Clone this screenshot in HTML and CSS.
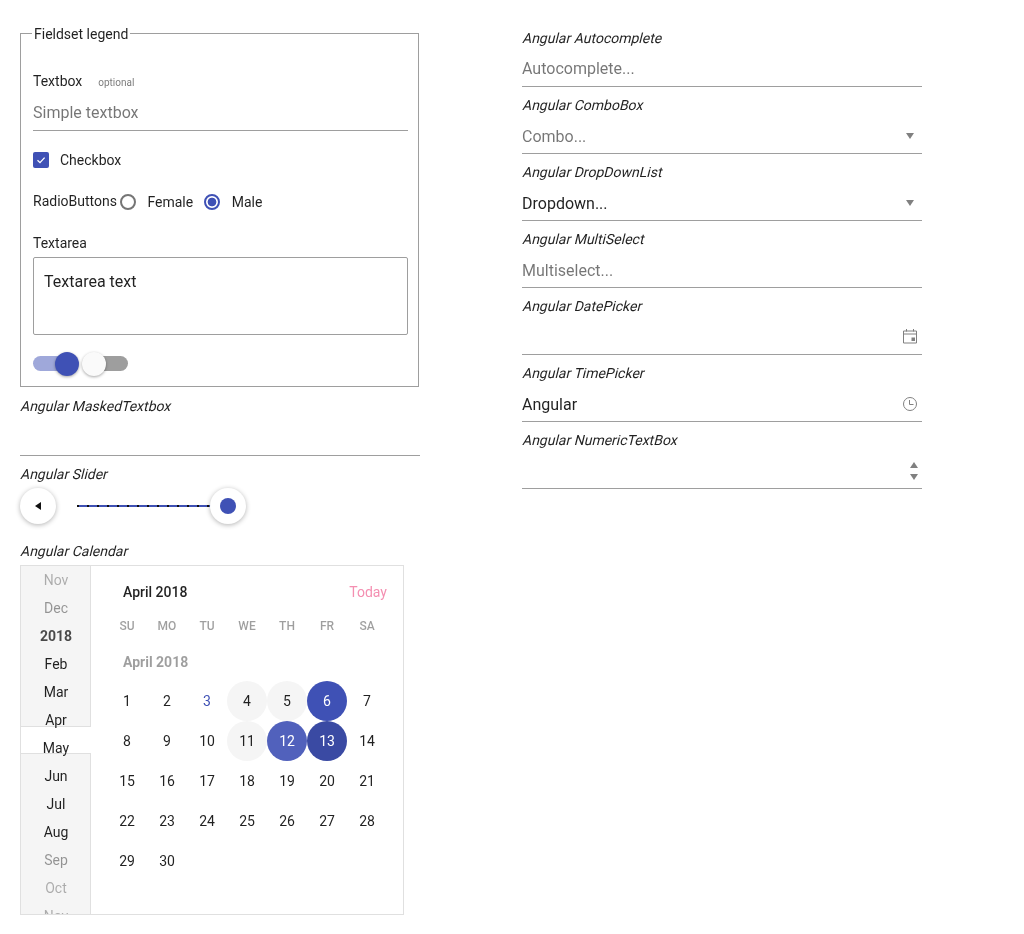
FILE: index.html
```html
<!DOCTYPE html>
<html lang="en">
<head>
    <meta charset="UTF-8">
    <meta name="viewport" content="width=device-width, initial-scale=1.0">
    <title>Angular Form Components</title>
    <link rel="stylesheet" href="styles.css">
</head>
<body>

<div class="page">
    <div class="column">
        <fieldset class="group">
            <legend>Fieldset legend</legend>

            <div class="label-row">
                <label for="simple">Textbox</label>
                <small>optional</small>
            </div>
            <input id="simple" class="textbox" type="text" placeholder="Simple textbox">

            <div class="check-row">
                <span class="checkbox">
                    <svg width="10" height="10" viewBox="0 0 10 10"><path d="M1.5 5.2 L4 7.6 L8.6 2.6" fill="none" stroke="#fff" stroke-width="1.3"/></svg>
                </span>
                <span>Checkbox</span>
            </div>

            <div class="radio-row">
                <span class="radio-title">RadioButtons</span>
                <span class="radio"></span>
                <span class="radio-label">Female</span>
                <span class="radio checked"></span>
                <span class="radio-label">Male</span>
            </div>

            <label class="area-label" for="area">Textarea</label>
            <textarea id="area" class="area">Textarea text</textarea>

            <div class="switches">
                <span class="switch on"><span class="thumb"></span></span>
                <span class="switch off"><span class="thumb"></span></span>
            </div>
        </fieldset>

        <div class="caption masked-caption"><span>Angular MaskedTextbox</span></div>
        <input class="textbox masked" type="text">

        <div class="caption slider-caption"><span>Angular Slider</span></div>
        <div class="slider">
            <span class="slider-btn">
                <svg width="6" height="8" viewBox="0 0 6 8"><path d="M0 4 L6 0 V8 Z" fill="#111"/></svg>
            </span>
            <div class="track">
                <span class="handle"><span class="handle-dot"></span></span>
            </div>
        </div>

        <div class="caption calendar-caption"><span>Angular Calendar</span></div>
        <div class="calendar">
            <div class="months">
                <span class="month-band"></span>
                <div class="month faded">Nov</div>
                <div class="month dim">Dec</div>
                <div class="month year">2018</div>
                <div class="month">Feb</div>
                <div class="month">Mar</div>
                <div class="month">Apr</div>
                <div class="month">May</div>
                <div class="month">Jun</div>
                <div class="month">Jul</div>
                <div class="month">Aug</div>
                <div class="month dim">Sep</div>
                <div class="month faded">Oct</div>
                <div class="month faded">Nov</div>
            </div>
            <div class="cal-main">
                <div class="cal-head">
                    <span class="cal-title">April 2018</span>
                    <span class="cal-today">Today</span>
                </div>
                <div class="days week-names">
                    <span>SU</span><span>MO</span><span>TU</span><span>WE</span><span>TH</span><span>FR</span><span>SA</span>
                </div>
                <div class="cal-sub">April 2018</div>
                <div class="days dates">
                    <span>1</span><span>2</span><span class="today">3</span><span class="soft">4</span><span class="soft">5</span><span class="sel">6</span><span>7</span>
                    <span>8</span><span>9</span><span>10</span><span class="soft">11</span><span class="sel hover">12</span><span class="sel dark">13</span><span>14</span>
                    <span>15</span><span>16</span><span>17</span><span>18</span><span>19</span><span>20</span><span>21</span>
                    <span>22</span><span>23</span><span>24</span><span>25</span><span>26</span><span>27</span><span>28</span>
                    <span>29</span><span>30</span>
                </div>
            </div>
        </div>
    </div>

    <div class="column right">
        <div class="field">
            <div class="caption"><span>Angular Autocomplete</span></div>
            <div class="line"><input class="raised" type="text" placeholder="Autocomplete..."></div>
        </div>
        <div class="field">
            <div class="caption"><span>Angular ComboBox</span></div>
            <div class="line"><input type="text" placeholder="Combo..."><span class="arrow"></span></div>
        </div>
        <div class="field">
            <div class="caption"><span>Angular DropDownList</span></div>
            <div class="line"><input type="text" value="Dropdown..."><span class="arrow"></span></div>
        </div>
        <div class="field">
            <div class="caption"><span>Angular MultiSelect</span></div>
            <div class="line"><input type="text" placeholder="Multiselect..."></div>
        </div>
        <div class="field">
            <div class="caption"><span>Angular DatePicker</span></div>
            <div class="line">
                <input type="text">
                <svg class="icon" width="16" height="16" viewBox="0 0 16 16">
                    <path d="M1.5 2 H14.5 V14 H1.5 Z M1.5 5 H14.5 M4.5 0 V2.5 M11.5 0 V2.5" fill="none" stroke="#808080"/>
                    <rect x="9.5" y="8.5" width="3.5" height="3.5" fill="#808080"/>
                </svg>
            </div>
        </div>
        <div class="field">
            <div class="caption"><span>Angular TimePicker</span></div>
            <div class="line">
                <input type="text" value="Angular">
                <svg class="icon" width="16" height="16" viewBox="0 0 16 16">
                    <circle cx="8" cy="8" r="6.5" fill="none" stroke="#808080"/>
                    <path d="M7.5 4 V8.5 H11.5" fill="none" stroke="#808080"/>
                </svg>
            </div>
        </div>
        <div class="field">
            <div class="caption"><span>Angular NumericTextBox</span></div>
            <div class="line">
                <input type="text">
                <span class="spin">
                    <span class="spin-up"></span>
                    <span class="spin-down"></span>
                </span>
            </div>
        </div>
    </div>
</div>

</body>
</html>
```

FILE: styles.css
```css
* {
    box-sizing: border-box;
}
html, body {
    margin: 0;
    padding: 0;
    background: #fff;
}
body {
    font-family: Roboto, "Noto Sans", sans-serif;
    font-size: 14px;
    color: rgba(0, 0, 0, 0.87);
}
input, textarea {
    font-family: Roboto, "Noto Sans", sans-serif;
    font-size: 16px;
    color: rgba(0, 0, 0, 0.87);
    outline: none;
}
input::placeholder {
    color: rgba(0, 0, 0, 0.54);
    opacity: 1;
}

.page {
    display: grid;
    grid-template-columns: 400px 400px;
    column-gap: 102px;
    padding: 23px 0 0 20px;
    will-change: transform;
}
.caption {
    line-height: 20px;
}
/* slanted upright face, the real italic runs narrower than the original */
.caption span {
    display: inline-block;
    transform: skewX(-14deg);
    transform-origin: 0 75%;
}

/* fieldset */
.group {
    width: 399px;
    height: 364px;
    margin: 0;
    padding: 0 10px 0 12px;
    border: 1px solid #9e9e9e;
}
.group legend {
    height: 20px;
    margin-left: -1px;
    padding: 1px 2px 0;
    line-height: 20px;
}
.label-row {
    display: flex;
    align-items: baseline;
    margin-top: 28px;
    line-height: 20px;
}
.label-row small {
    margin-left: 16px;
    font-size: 10px;
    color: rgba(0, 0, 0, 0.54);
}
.textbox {
    display: block;
    width: 100%;
    height: 38px;
    padding: 2px 0 0;
    border: 0;
    border-bottom: 1px solid #9e9e9e;
    background: none;
}
.check-row {
    display: flex;
    align-items: center;
    margin-top: 21px;
    height: 16px;
}
.checkbox {
    display: flex;
    align-items: center;
    justify-content: center;
    width: 16px;
    height: 16px;
    margin-right: 11px;
    background: #3f51b5;
    border-radius: 2px;
}
.radio-row {
    display: flex;
    align-items: center;
    margin-top: 26px;
    height: 16px;
}
.radio-title {
    margin-right: 3px;
    position: relative;
    top: -1px;
}
.radio {
    width: 16px;
    height: 16px;
    border: 2px solid #757575;
    border-radius: 50%;
}
.radio.checked {
    border-color: #3f51b5;
    background: radial-gradient(circle, #3f51b5 0, #3f51b5 4px, #fff 4.7px);
}
.radio-label {
    margin: 0 11px 0 11.5px;
}
.area-label {
    display: block;
    margin-top: 23px;
    line-height: 20px;
}
.area {
    display: block;
    width: 375px;
    height: 78px;
    margin-top: 4px;
    padding: 12px 10px;
    line-height: 24px;
    border: 1px solid #9e9e9e;
    border-radius: 2px;
    resize: none;
}
.switches {
    display: flex;
    gap: 11px;
    margin-top: 21px;
}
.switch {
    position: relative;
    width: 42px;
    height: 15px;
    border-radius: 8px;
}
.switch.on {
    background: #9fa8da;
}
.switch.off {
    background: #9e9e9e;
}
.thumb {
    position: absolute;
    top: -4px;
    width: 24px;
    height: 24px;
    border-radius: 50%;
    box-shadow: 0 1px 3px rgba(0, 0, 0, 0.35);
}
.on .thumb {
    right: -4px;
    background: #3f51b5;
}
.off .thumb {
    left: -4px;
    background: #fafafa;
}

/* masked textbox and slider */
.masked-caption {
    margin-top: 9px;
}
.textbox.masked {
    height: 40px;
}
.slider-caption {
    margin-top: 8px;
}
.slider {
    display: flex;
    align-items: center;
    margin-top: 4px;
    height: 36px;
}
.slider-btn {
    display: flex;
    align-items: center;
    justify-content: center;
    width: 36px;
    height: 36px;
    border-radius: 50%;
    background: #fff;
    box-shadow: 0 1px 5px rgba(0, 0, 0, 0.3);
}
.track {
    position: relative;
    width: 151px;
    height: 2px;
    margin-left: 21px;
    background: repeating-linear-gradient(90deg, #111 0, #111 2px, #3f51b5 2px, #3f51b5 10px);
}
.handle {
    position: absolute;
    top: -17px;
    right: -18px;
    display: flex;
    align-items: center;
    justify-content: center;
    width: 36px;
    height: 36px;
    border-radius: 50%;
    background: #fff;
    box-shadow: 0 1px 5px rgba(0, 0, 0, 0.3);
}
.handle-dot {
    width: 16px;
    height: 16px;
    border-radius: 50%;
    background: #3f51b5;
}

/* calendar */
.calendar-caption {
    margin-top: 17px;
}
.calendar {
    display: flex;
    width: 384px;
    height: 350px;
    margin-top: 4px;
    border: 1px solid #e0e0e0;
    background: #fff;
}
.months {
    position: relative;
    width: 70px;
    overflow: hidden;
    background: #f5f5f5;
    box-shadow: inset -1px 0 0 #e0e0e0;
}
.month-band {
    position: absolute;
    top: 160px;
    left: 0;
    width: 70px;
    height: 28px;
    background: #fff;
    border-top: 1px solid #e0e0e0;
    border-bottom: 1px solid #e0e0e0;
}
.month {
    position: relative;
    text-align: center;
    line-height: 28px;
}
.month.dim {
    color: rgba(0, 0, 0, 0.4);
}
.month.faded {
    color: rgba(0, 0, 0, 0.3);
}
.month.year {
    font-weight: 700;
    color: rgba(0, 0, 0, 0.7);
}
.cal-main {
    flex: 1;
    padding-left: 16px;
}
.cal-head {
    display: flex;
    justify-content: space-between;
    align-items: center;
    height: 20px;
    margin: 16px 16px 0 16px;
}
.cal-title {
    font-weight: 500;
}
.cal-today {
    color: #f48fb1;
}
.days {
    display: grid;
    grid-template-columns: repeat(7, 40px);
    text-align: center;
}
.week-names {
    margin-top: 14px;
    font-size: 12px;
    font-weight: 500;
    line-height: 20px;
    color: rgba(0, 0, 0, 0.38);
}
.cal-sub {
    margin: 16px 0 0 16px;
    font-weight: 700;
    line-height: 20px;
    color: rgba(0, 0, 0, 0.38);
}
.dates {
    margin-top: 9px;
}
.dates span {
    height: 40px;
    line-height: 40px;
    border-radius: 50%;
}
.dates .today {
    color: #3f51b5;
}
.dates .soft {
    background: #f5f5f5;
}
.dates .sel {
    background: #3f51b5;
    color: #fff;
}
.dates .sel.hover {
    background: #5161bc;
}
.dates .sel.dark {
    background: #3a4aa3;
}

/* right column */
.right {
    padding-top: 5px;
}
.field {
    height: 67px;
}
.line {
    display: flex;
    align-items: center;
    height: 39px;
    padding-top: 4px;
    border-bottom: 1px solid #9e9e9e;
}
.line input {
    flex: 1;
    min-width: 0;
    height: 34px;
    padding: 0;
    border: 0;
    background: none;
}
.line input.raised {
    padding-bottom: 2px;
}
.arrow {
    width: 0;
    height: 0;
    margin-right: 8px;
    border-left: 4.5px solid transparent;
    border-right: 4.5px solid transparent;
    border-top: 6px solid #808080;
}
.icon {
    margin-right: 4px;
}
.spin {
    display: flex;
    flex-direction: column;
    gap: 6px;
    margin-right: 4px;
}
.spin-up, .spin-down {
    width: 0;
    height: 0;
    border-left: 4.5px solid transparent;
    border-right: 4.5px solid transparent;
}
.spin-up {
    border-bottom: 6px solid #808080;
}
.spin-down {
    border-top: 6px solid #808080;
}
```
